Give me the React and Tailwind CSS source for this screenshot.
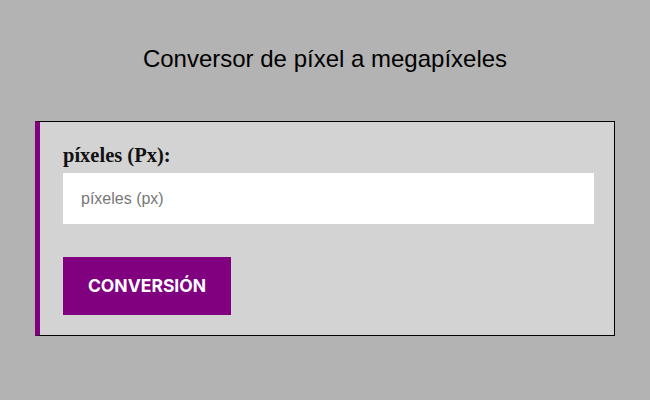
export default function App() {
  return (
    <div className="w-full h-[400px] bg-[#b3b3b3] pt-[43px] font-['Liberation_Sans',Arial,sans-serif]">
      {/* Title */}
      <h1 className="text-center text-[24px] leading-[32px] text-black">
        Conversor de píxel a megapíxeles
      </h1>

      {/* Card */}
      <div className="mx-[35px] mt-[46px] bg-[#d3d3d3] border border-black border-l-[5px] border-l-[#800080] pl-[23px] pr-[20px] pt-[21px] pb-[20px]">
        <label className="block font-['Liberation_Serif',serif] font-bold text-[20.5px] leading-[25px] text-[#111]">
          píxeles (Px):
        </label>
        <input
          type="text"
          placeholder="píxeles (px)"
          className="mt-[5px] block w-full h-[51px] bg-white px-[18px] text-[16px] text-black placeholder:text-[#777] outline-none"
        />
        <button className="mt-[33px] block w-[168px] h-[58px] bg-[#800080] text-white font-['Inter',sans-serif] font-bold text-[17.5px]">
          CONVERSIÓN
        </button>
      </div>
    </div>
  );
}
